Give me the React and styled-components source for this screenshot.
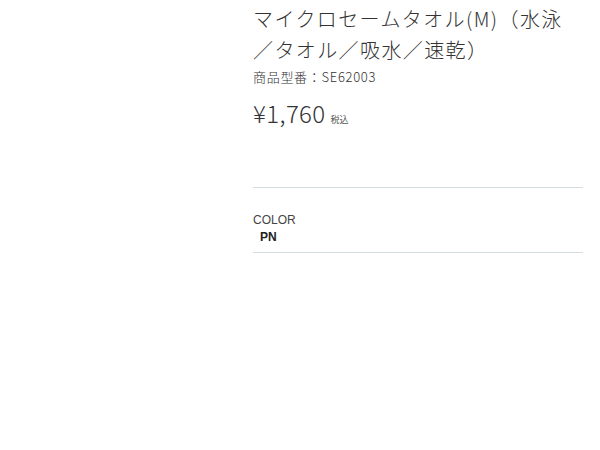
import React from 'react';
import styled, { createGlobalStyle } from 'styled-components';

const GlobalStyle = createGlobalStyle`
  body {
    margin: 0;
    background: #fff;
    font-family: 'Noto Sans CJK JP', 'Noto Sans', sans-serif;
    color: #333;
  }
`;

const Page = styled.div`
  display: grid;
  grid-template-columns: 253px 330px;
  height: 450px;
`;

const Detail = styled.section`
  grid-column: 2;
  padding-top: 3px;
`;

const Title = styled.h1`
  margin: 0;
  font-size: 20px;
  font-weight: 300;
  line-height: 31px;
  letter-spacing: 1.4px;
  color: #333;
`;

const Model = styled.p`
  margin: 3px 0 0;
  font-size: 13px;
  font-weight: 300;
  line-height: 18px;
  letter-spacing: 0.7px;
  color: #333;
`;

const Price = styled.div`
  display: flex;
  align-items: baseline;
  gap: 5px;
  margin-top: 12px;
`;

const Amount = styled.span`
  font-size: 24px;
  font-weight: 300;
  line-height: 30px;
  letter-spacing: 0.4px;
  color: #333;
`;

const Tax = styled.span`
  font-size: 9px;
  color: #555;
`;

const Options = styled.div`
  margin-top: 59px;
  border-top: 1px solid #d4dde0;
  border-bottom: 1px solid #d4dde0;
  padding: 24px 0 6px;
`;

const Label = styled.div`
  font-family: 'Liberation Sans', Arial, sans-serif;
  font-size: 12px;
  line-height: 16px;
  color: #444;
`;

const Value = styled.div`
  font-family: 'Liberation Sans', Arial, sans-serif;
  font-size: 12px;
  font-weight: 700;
  line-height: 18px;
  padding-left: 7px;
  color: #222;
`;

export default function App() {
  return (
    <>
      <GlobalStyle />
      <Page>
        <Detail>
          <Title>
            マイクロセームタオル(M)（水泳<br />／タオル／吸水／速乾）
          </Title>
          <Model>商品型番：SE62003</Model>
          <Price>
            <Amount>¥1,760</Amount>
            <Tax>税込</Tax>
          </Price>
          <Options>
            <Label>COLOR</Label>
            <Value>PN</Value>
          </Options>
        </Detail>
      </Page>
    </>
  );
}
